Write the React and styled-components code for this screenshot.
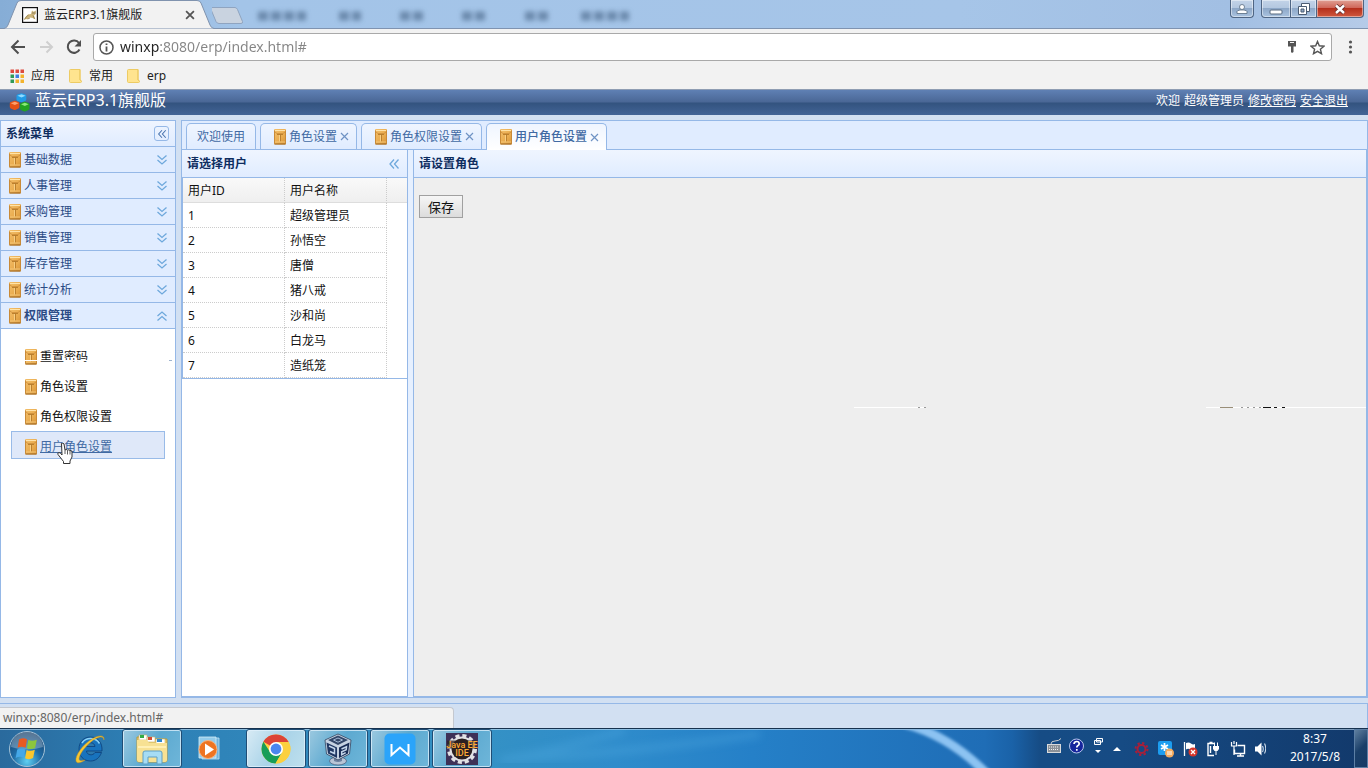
import React, {useState} from "react"
import styled, {createGlobalStyle, css} from "styled-components"


const GlobalStyle = createGlobalStyle`
*{
    box-sizing: border-box;
}
body{
    margin: 0;
    overflow: hidden;
    font-family: "Noto Sans", "Noto Sans CJK SC", sans-serif;
    font-size: 12px;
    line-height: 16px;
    color: #111;
}
button, input{
    font: inherit;
    color: inherit;
    margin: 0;
    padding: 0;
    border: 0;
    background: none;
}
svg{
    display: block;
    flex: none;
}`

const Screen = styled.div`
    display: flex;
    flex-direction: column;
    height: 100vh;
    background: #d2e0f2;
`

/* ---------- browser ---------- */

const TitleBar = styled.header`
    position: relative;
    display: flex;
    align-items: flex-start;
    flex: none;
    height: 29px;
    padding-left: 4px;
    border-bottom: 1px solid #7f93b0;
    background: linear-gradient(90deg, #86add6 0, #a3c4e8 240px, #a6c5e8 70%, #a2bfe3 90%, #b6cbe8 100%);
`

const BrowserTab = styled.div`
    position: relative;
    display: flex;
    align-items: center;
    gap: 6px;
    width: 208px;
    height: 29px;
    padding: 0 17px 0 18px;
`

const TabShape = styled.svg`
    position: absolute;
    left: 0;
    top: 0;
`

const TabTitle = styled.span`
    position: relative;
    flex: 1;
    color: #222;
`

const TabIcon = styled.span`
    position: relative;
`

const PlainButton = styled.button`
    position: relative;
    display: flex;
    align-items: center;
    justify-content: center;
`

const WindowButtons = styled.div`
    display: flex;
    margin-left: auto;
    padding-right: 4px;
`

const WindowButton = styled.button`
    display: flex;
    align-items: center;
    justify-content: center;
    width: ${props => props.$w}px;
    height: 18px;
    margin-right: ${props => props.$gap || 0}px;
    border: 1px solid #4f6583;
    border-top: 0;
    border-left-width: ${props => props.$joined ? 0 : 1}px;
    border-radius: ${props => props.$radius};
    box-shadow: inset 0 0 0 1px rgba(255,255,255,.45);
    background: ${props => props.$close
        ? "linear-gradient(#e0a093 0, #d0685a 45%, #b5301c 50%, #d0583e 100%)"
        : "linear-gradient(#c3d3e8 0, #b4c8e0 45%, #8ea8c8 50%, #a9c2df 100%)"};
`

const AddressRow = styled.div`
    display: flex;
    align-items: center;
    flex: none;
    height: 35px;
    padding: 1px 10px 0 10px;
    background: #f2f2f2;
`

const NavButton = styled(PlainButton)`
    width: 16px;
    height: 16px;
    margin-right: ${props => props.$gap || 12}px;
`

const AddressBox = styled.label`
    display: flex;
    align-items: center;
    flex: 1;
    gap: 6px;
    height: 28px;
    padding: 0 5px;
    border: 1px solid #a9a9a9;
    border-radius: 3px;
    background: #fff;
`

const AddressInput = styled.input`
    flex: 1;
    min-width: 0;
    font-size: 14px;
    line-height: 20px;
    outline: none;
    background: linear-gradient(90deg, #222 40px, #858585 40px);
    background-clip: text;
    -webkit-background-clip: text;
    -webkit-text-fill-color: transparent;
`

const Bookmarks = styled.nav`
    display: flex;
    align-items: center;
    flex: none;
    gap: 14px;
    height: 25px;
    padding: 0 10px 1px;
    background: #f2f2f2;
`

const Bookmark = styled.a`
    display: flex;
    align-items: center;
    gap: 7px;
    color: #222;
    text-decoration: none;
`

const StatusBubble = styled.div`
    position: absolute;
    left: 0;
    bottom: 0;
    width: 454px;
    height: 21px;
    padding: 2px 3px;
    border: 1px solid #c4c8cf;
    border-width: 1px 1px 0 0;
    border-top-right-radius: 4px;
    background: #f2f2f2;
    color: #666;
`

/* ---------- erp page ---------- */

const Banner = styled.header`
    display: flex;
    align-items: center;
    flex: none;
    height: 26px;
    padding: 0 20px 0 9px;
    border-top: 1px solid #8f9db3;
    background: linear-gradient(#5f80b4 0, #4a6796 12px, #33537f 13px, #426496 100%);
    color: #fff;
`

const BannerTitle = styled.h1`
    flex: 1;
    margin: 0 0 0 5px;
    padding-bottom: 5px;
    font-size: 16px;
    font-weight: 400;
    line-height: 20px;
`

const BannerLinks = styled.div`
    display: flex;
    gap: 4px;
    padding-bottom: 3px;

    a{
        color: #fff;
    }
`

const Workspace = styled.div`
    display: flex;
    flex: 1;
    gap: 5px;
    min-height: 0;
    padding: 5px 0;
`

const panelBorder = css`
    border: 1px solid #95b8e7;
`

const headerFill = css`
    background: linear-gradient(#eff5ff 0, #e0ecff 100%);
`

const Sidebar = styled.aside`
    position: relative;
    flex: none;
    width: 176px;
    ${panelBorder}
    background: #fff;
`

const PanelHeader = styled.div`
    display: flex;
    align-items: center;
    justify-content: space-between;
    height: ${props => props.$tall ? 28 : 26}px;
    padding: 0 6px 0 5px;
    border-bottom: 1px solid #95b8e7;
    ${headerFill}
    color: #0e2d5f;
    font-weight: 700;
`

const CollapseButton = styled(PlainButton)`
    width: 15px;
    height: 15px;
    border: ${props => props.$boxed ? "1px solid #95b8e7" : "0"};
    border-radius: 3px;
`

const AccordionHeader = styled.button`
    display: flex;
    align-items: center;
    gap: 2px;
    width: 100%;
    height: 26px;
    padding: 0 7px;
    border-bottom: 1px solid #95b8e7;
    background: #e0ecff;
    color: #2b4b85;
    font-weight: ${props => props.$open ? 700 : 400};
    text-align: left;

    span{
        flex: 1;
    }
`

const Submenu = styled.ul`
    display: flex;
    flex-direction: column;
    gap: 2px;
    margin: 0;
    padding: 12px 10px;
    list-style: none;
`

const SubmenuLink = styled.a`
    display: flex;
    align-items: center;
    gap: 2px;
    height: 28px;
    padding: 3px 12px 0;
    border: 1px solid ${props => props.$active ? "#99bbe8" : "transparent"};
    background: ${props => props.$active ? "#dfe8f9" : "none"};
    color: ${props => props.$active ? "#416aa3" : "#111"};
    text-decoration: ${props => props.$active ? "underline" : "none"};
`

const Pointer = styled.svg`
    position: absolute;
    left: 54px;
    top: 321px;
`

const Center = styled.main`
    display: flex;
    flex-direction: column;
    flex: 1;
    min-width: 0;
    ${panelBorder}
    background: #e6f0ff;
`

const TabStrip = styled.div`
    display: flex;
    align-items: flex-end;
    flex: none;
    gap: 4px;
    height: 29px;
    padding-left: 4px;
    border-bottom: 1px solid #95b8e7;
    background: #e0ecff;
`

const PageTab = styled.div`
    display: flex;
    align-items: center;
    height: ${props => props.$active ? 27 : 26}px;
    margin-bottom: ${props => props.$active ? -1 : 0}px;
    padding: 0 ${props => props.$plain ? 10 : 7}px 0 ${props => props.$plain ? 10 : 12}px;
    border: 1px solid #95b8e7;
    border-bottom: 0;
    border-radius: 5px 5px 0 0;
    background: ${props => props.$active ? "linear-gradient(#eff5ff, #fff)" : "linear-gradient(#eff5ff, #e0ecff)"};
    color: #416aa3;
`

const PageTabButton = styled.button`
    display: flex;
    align-items: center;
    gap: 2px;
    font-weight: ${props => props.$active ? 500 : 400};
`

const CloseButton = styled(PlainButton)`
    width: 9px;
    height: 16px;
    margin-left: 3px;
`

const Panels = styled.div`
    display: flex;
    flex: 1;
    gap: 5px;
    min-height: 0;
`

const Panel = styled.section`
    position: relative;
    flex: ${props => props.$width ? "none" : 1};
    width: ${props => props.$width ? props.$width + "px" : "auto"};
    min-width: 0;
    ${panelBorder}
    border-top: 0;
    border-left-width: ${props => props.$width ? 0 : 1}px;
    background: ${props => props.$fill || "#fff"};
`

const UserTable = styled.table`
    width: 100%;
    border-collapse: separate;
    border-spacing: 0;
    table-layout: fixed;
    border: 1px solid #95b8e7;
    border-width: 0 0 1px 1px;

    th, td{
        height: 25px;
        padding: 1px 5px 0;
        border-right: 1px dotted #ccc;
        border-bottom: 1px dotted #ccc;
        text-align: left;
        font-weight: 400;
        color: #111;
    }
    th{
        background: linear-gradient(#f9f9f9, #efefef);
        border-bottom: 1px solid #ddd;
    }
    th:last-child, td:last-child{
        border-right: 0;
    }
    td:last-child{
        border-bottom: 0;
    }
`

const SaveButton = styled.button`
    display: block;
    width: 44px;
    height: 23px;
    margin: 17px 5px;
    border: 1px solid #a0a0a0;
    background: linear-gradient(#f6f6f6, #dcdcdc);
    color: #111;
    font-size: 13px;
`

const Streaks = styled.svg`
    position: absolute;
    right: 0;
    top: ${props => props.$top}px;
    pointer-events: none;
`

const SouthPanel = styled.footer`
    position: relative;
    flex: none;
    height: 25px;
    ${panelBorder}
    border-bottom: 0;
    border-left: 0;
    background: #d2e0f2;
`

/* ---------- taskbar ---------- */

const Taskbar = styled.footer`
    position: relative;
    display: flex;
    align-items: stretch;
    flex: none;
    height: 40px;
    border-top: 1px solid #17324f;
    box-shadow: inset 0 1px 0 rgba(200,225,245,.6);
    background: linear-gradient(90deg, #2a6a9d 0, #2d7fb5 10%, #3592c4 34%, #2f8ccb 45%, #2580c8 55%, #1f6db6 72%, #1a62a8 74%, #164c85 76%, #164b84 82%, #12396b 100%);
`

const Swoosh = styled.svg`
    position: absolute;
    left: 0;
    top: 1px;
`

const TaskButtons = styled.div`
    position: relative;
    display: flex;
    gap: 2px;
    flex: 1;
`

const TaskButton = styled.button`
    display: flex;
    align-items: center;
    justify-content: center;
    width: 60px;
    height: 39px;
    border: 1px solid ${props => props.$open ? "#1f4d75" : "transparent"};
    border-radius: 3px;
    box-shadow: ${props => props.$open ? "inset 0 0 0 1px rgba(225,242,252,.75)" : "none"};
    background: ${props => !props.$open ? "none" : props.$current
        ? "linear-gradient(120deg, #d8ebf5, #a9d3e8 50%, #bfe0ee)"
        : "linear-gradient(120deg, #9cc9e0, #5ca9d0 50%, #6fb6d9)"};
`

const StartButton = styled(TaskButton)`
    width: 58px;
    padding-right: 4px;
`

const Tray = styled.div`
    position: relative;
    display: flex;
    align-items: center;
`

const Clock = styled.time`
    width: 64px;
    margin: 0 7px 0 17px;
    padding-bottom: 2px;
    color: #fff;
    line-height: 18px;
    text-align: center;
`

const ShowDesktop = styled.button`
    width: 14px;
    border: 1px solid #5c7fa5;
    background: linear-gradient(135deg, #5f7f9f, #1a3f69 50%, #163a66);
`


const BoxIcon = () => (
    <svg width="14" height="16" viewBox="0 0 14 16">
        <defs>
            <linearGradient id="gold" x1="0" y1="0" x2="1" y2="1">
                <stop offset="0" stopColor="#f3c06c"/>
                <stop offset=".6" stopColor="#e9ab4e"/>
                <stop offset="1" stopColor="#d59236"/>
            </linearGradient>
        </defs>
        <path d="M1 1q0-1 1-1h10q1 0 1 1v13.500q0 1-1 1H2q-1 0-1-1z" fill="url(#gold)"/>
        <path d="M2 1h10v1H2z" fill="#ffe3a8"/>
        <path d="M1.500 1.500v13M12.500 1.500v13" stroke="#c98a38" strokeWidth="1"/>
        <path d="M2 3l2 1.500h6L12 3" fill="none" stroke="#cd8d39" strokeWidth=".8"/>
        <path d="M4 5.500h6M7.500 5.500v7" stroke="#b57a2a" strokeWidth=".9"/>
        <path d="M6.500 6v6.500" stroke="#fbd792" strokeWidth=".8"/>
        <path d="M2 13h10" stroke="#f6cd84" strokeWidth=".8"/>
        <path d="M1.500 15h11" stroke="#9a6422"/>
    </svg>
)

const Chevrons = ({dir = "down", color = "#6ea8dc", size = 12}) => {
    const turn = {down: 0, up: 180, left: 90}[dir]
    return (
        <svg width={size} height={size} viewBox="0 0 12 12" fill="none" stroke={color} strokeWidth="1.3">
            <path d="M1.500 1.500L6 5.500l4.500-4M1.500 6L6 10l4.500-4" transform={`rotate(${turn} 6 6)`}/>
        </svg>
    )
}

const Cross = ({size = 9, color = "#6f93c4", width = 1.2}) => (
    <svg width={size} height={size} viewBox="0 0 9 9" stroke={color} strokeWidth={width}>
        <path d="M1 1l7 7M8 1l-7 7"/>
    </svg>
)

const CatIcon = () => (
    <svg width="16" height="16" viewBox="0 0 16 16">
        <rect x=".6" y=".6" width="14.800" height="14.800" fill="#fff" stroke="#111" strokeWidth="1.200"/>
        <path d="M2 12.500l1.500-2.500 2.500-2.500 3-.5 1-3.500 1.500 1.200 2.500-1.200-.3 3.500-1.700 1.500 1.500 4-2.800-1.500-3-.5-2 1.500z" fill="#cdb57a"/>
        <path d="M2.500 12.500l2-3 2-1.500M11 8.500l1.500 3.500M5.500 12l2.500-1" fill="none" stroke="#857243" strokeWidth=".7"/>
        <path d="M10.500 6h1M12.500 6h.8" stroke="#333" strokeWidth=".8"/>
    </svg>
)

const FolderMark = () => (
    <svg width="13" height="14" viewBox="0 0 13 14">
        <path d="M.5 1.500Q.5.5 1.500.5h9.500V11l1.500 1v.5q0 1-1 1h-10q-1 0-1-1z" fill="#ffe48f" stroke="#edcb63"/>
        <path d="M11 .5V11l1.500 1" fill="none" stroke="#edcb63"/>
    </svg>
)

const AppsIcon = () => {
    const colors = ["#dd4b3e", "#dd4b3e", "#dd4b3e", "#2f9a57", "#3d7fe0", "#f3b32c", "#2f9a57", "#f3b32c", "#f3b32c"]
    return (
        <svg width="14" height="14" viewBox="0 0 14 14">
            {colors.map((c, i) => (
                <rect key={i} x={(i % 3) * 5 + .5} y={Math.floor(i / 3) * 5 + .5} width="3.500" height="3.500" fill={c}/>
            ))}
        </svg>
    )
}

const CubesIcon = () => (
    <svg width="21" height="19" viewBox="0 0 21 19">
        <path d="M7.500 3q0-1 1-1.400L11.500.4q1-.3 2 0l2.800 1.200q1 .4 1 1.400v3.500q0 1-1 1.400L13.400 9q-1 .3-2 0L8.500 7.900q-1-.4-1-1.400z" fill="#219be6"/>
        <path d="M8.500 2.800l4-1.600 4 1.600-4 1.800z" fill="#8fdbff"/>
        <path d="M.8 10.500q0-1 1-1.400L4.800 8q1-.3 2 0l2.600 1.100q1 .4 1 1.400V14q0 1-1 1.400L6.700 16.700q-1 .4-2 0L1.800 15.400q-1-.4-1-1.400z" fill="#e65216"/>
        <path d="M1.800 10.300l4-1.500 3.800 1.500-3.800 1.800z" fill="#ffa06c"/>
        <path d="M11 11.500q0-1 1-1.400L14.700 9q1-.3 2 0l2.800 1.100q1 .4 1 1.400v4q0 1-1 1.400l-2.800 1.400q-1 .4-2 0L12 16.900q-1-.4-1-1.400z" fill="#23a321"/>
        <path d="M12 11.300l3.800-1.600 3.800 1.600-3.800 1.800z" fill="#8be878"/>
    </svg>
)

const HandPointer = () => (
    <Pointer width="20" height="23" viewBox="0 0 20 23">
        <path d="M6.500 1.500q1.500-1 2.500.5l1 6q1.200-1.200 2.500.2 1.500-1 2.500.4 1.800-.6 2 1.400v5l-2 4v2.500H8.500v-2L3 12.500q-.8-1.800 1-2 1.500.2 3 2.500z" fill="#fff" stroke="#333" strokeWidth="1"/>
        <path d="M10 8v4M12.500 8.500v4M15 9v3.500" stroke="#333" strokeWidth=".8"/>
    </Pointer>
)

const WindowsOrb = () => (
    <svg width="38" height="38" viewBox="0 0 38 38">
        <defs>
            <radialGradient id="orb" cx=".5" cy=".85" r=".9">
                <stop offset="0" stopColor="#5fd0f2"/>
                <stop offset=".45" stopColor="#1f6ca6"/>
                <stop offset="1" stopColor="#18395f"/>
            </radialGradient>
        </defs>
        <circle cx="19" cy="19" r="17.500" fill="url(#orb)" stroke="#a5c3d8"/>
        <path d="M3 17a16 15 0 0132 0q-16 5-32 0z" fill="#fff" opacity=".28"/>
        <path d="M11 9.500q4-2.300 8-.3l-1.400 8.500q-4-2-8 0z" fill="#e85a23"/>
        <path d="M20.300 10q4 1.700 8.500-.3l-1.700 8.300q-4 2-8.200.2z" fill="#8cc63e"/>
        <path d="M9.200 19.500q4-2 8.200-.1l-1.500 8.300q-4-1.800-8.200.2z" fill="#45a8e8"/>
        <path d="M18.600 20q4 1.800 8.200-.2l-1.700 8.300q-4 2-8 .1z" fill="#fcc72c"/>
    </svg>
)

const IeIcon = () => (
    <svg width="34" height="34" viewBox="0 0 34 34">
        <path d="M17.500 5C25 5 29.500 10.500 29 19H13.500c.3 4.500 6.500 5 8.500 1.500h6.500C26.500 26 22.500 29 17.500 29 10.500 29 6 24 6 17S10.500 5 17.500 5zM13.500 14.500h8.500c-.5-5-8-5-8.500 0z" fill="#1873bd" stroke="#0c3f78" strokeWidth=".8"/>
        <path d="M9 11q3-4.500 8.500-4.500 6 0 9 5" fill="none" stroke="#8bd2f5" strokeWidth="1.500"/>
        <path d="M31 8c1-5-5-5.500-12-1C9 13 2 24 3 29c.6 3 5 2 9-1-5 1.500-7 .5-5.500-3.500C9 18 17 9.500 23 6.500c4-2 7.500-2.500 8 1.500z" fill="#f5c733" stroke="#c8921c" strokeWidth=".5"/>
    </svg>
)

const ExplorerIcon = () => (
    <svg width="34" height="32" viewBox="0 0 34 32">
        <path d="M2 4h10l2 2h18v21q0 2-2 2H4q-2 0-2-2z" fill="#e9cd73" stroke="#b99a3d"/>
        <path d="M4 2h8v5H4zM12 4h8v5h-8zM21 6h9v5h-9z" fill="#fff" stroke="#cdb467" strokeWidth=".6"/>
        <path d="M5 2h4v3H5z" fill="#35ad45"/>
        <path d="M13 4h4v3h-4z" fill="#d54b30"/>
        <path d="M22 6h5v3h-5z" fill="#3188cc"/>
        <path d="M2 7h10l2 3h18v17q0 2-2 2H4q-2 0-2-2z" fill="#f7e193"/>
        <path d="M3 14h28" stroke="#fff0b5" strokeWidth="2"/>
        <path d="M8 20q0-2 2-2h15q2 0 2 2v11h-5v-7h-9v7H8z" fill="#a6dcf4" stroke="#5f9fc5"/>
    </svg>
)

const MediaIcon = () => (
    <svg width="32" height="28" viewBox="4 0 32 28">
        <path d="M8 3h17v21H8z" fill="#6fb3dd" stroke="#bfe1f3" strokeWidth=".8"/>
        <path d="M5 2h17v21H5z" fill="#93cbea" stroke="#d5edf8" strokeWidth=".8"/>
        <circle cx="14" cy="14.500" r="9" fill="#ee7421" stroke="#f9b37c"/>
        <path d="M11 8.500l9 6-9 6z" fill="#fff"/>
    </svg>
)

const ChromeIcon = () => (
    <svg width="30" height="30" viewBox="0 0 30 30">
        <circle cx="15" cy="15" r="14.500" fill="#fbd03f"/>
        <path d="M15 15L2.400 7.700A14.500 14.500 0 0127.600 8z" fill="#dc4437"/>
        <path d="M2.440 7.750A14.500 14.500 0 0014.500 29.500l6.500-11L15 15l-6 3z" fill="#179d58"/>
        <path d="M15 8h12.600A14.500 14.500 0 0114.500 29.500L21 18.500z" fill="#fbd03f"/>
        <circle cx="15" cy="15" r="7" fill="#fff"/>
        <circle cx="15" cy="15" r="5.400" fill="#4a86f0"/>
    </svg>
)

const VirtualBoxIcon = () => (
    <svg width="30" height="34" viewBox="0 0 30 34">
        <ellipse cx="15" cy="29" rx="8.500" ry="4" fill="#b9c5d6" stroke="#4e6180" strokeWidth=".8"/>
        <path d="M11 24h8v5q-4 2-8 0z" fill="#6d809f"/>
        <path d="M2 8L15 2l13 6-1.500 14L15 28 3.500 22z" fill="#c5d2e2" stroke="#33455f" strokeWidth=".8"/>
        <path d="M5 8l10-4.500L25 8l-10 5z" fill="#33476a"/>
        <path d="M3.500 10.500L14 15.500V26l-9-4.500z" fill="#1f3763"/>
        <path d="M26.500 10.500L16 15.500V26l9-4.500z" fill="#182c55"/>
        <path d="M6 14l5.500 2.500v5L7 19.500M18.500 17l5-2.300-.3 3-4.500 2v3l4-2" fill="none" stroke="#c3d5ea" strokeWidth="1.500"/>
        <path d="M10.500 8L15 6l4.500 2-4.500 2.200z" fill="none" stroke="#a5bbd6"/>
    </svg>
)

const WpsIcon = () => (
    <svg width="32" height="32" viewBox="0 0 32 32">
        <rect x=".5" y=".5" width="31" height="31" rx="5" fill="#2ba4fa"/>
        <path d="M7.500 11v11l8.500-7.500 8.500 7.500V11" fill="none" stroke="#fff" strokeWidth="2"/>
    </svg>
)

const EclipseIcon = () => (
    <svg width="32" height="32" viewBox="0 0 32 32">
        <rect width="32" height="32" fill="#3e3157"/>
        <circle cx="16" cy="16" r="13" fill="none" stroke="#e2e1e4" strokeWidth="4" strokeDasharray="4 2.800"/>
        <circle cx="16" cy="16" r="11.500" fill="#2c2022" stroke="#e2e1e4" strokeWidth="2"/>
        <path d="M1 7.500h30v8H1zM8 15.500h16v8H8z" fill="#2c2022" opacity=".75"/>
        <text x="16" y="15" textAnchor="middle" fontFamily="Roboto, sans-serif" fontSize="9" fontWeight="500" fill="#ffab36">Java EE</text>
        <text x="16" y="23" textAnchor="middle" fontFamily="Roboto, sans-serif" fontSize="9" fontWeight="500" fill="#ffab36">IDE</text>
    </svg>
)

const TrayIcons = () => (
    <svg width="220" height="38" viewBox="1045 730 220 38">
        {/* keyboard */}
        <path d="M1050 744q0-3 4-3t6-2.500" fill="none" stroke="#c9ccd0"/>
        <rect x="1046.500" y="744.500" width="13" height="8" fill="#8b9198" stroke="#d8dadc"/>
        <path d="M1048 747h10M1048 749.500h10" stroke="#f2f2f2" strokeDasharray="1 1"/>
        {/* help */}
        <circle cx="1075.500" cy="746" r="7" fill="#15249c" stroke="#b7c6ec"/>
        <path d="M1073 744q.3-2.500 2.700-2.500t2.500 2.200q0 1.300-1.500 2-.9.500-.9 1.800M1075.800 749v1.800" fill="none" stroke="#fff" strokeWidth="1.700"/>
        <path d="M1095.500 738.500h6v3.500h-6zM1093.500 740.500h6v4h-6z" fill="#23548c" stroke="#fff"/>
        <path d="M1094 750h6l-3 3z" fill="#fff"/>
        <path d="M1112 751h8l-4-4z" fill="#fff"/>
        {/* red gear */}
        <circle cx="1140.500" cy="749" r="4" fill="none" stroke="#a81f39" strokeWidth="2"/>
        <circle cx="1140.500" cy="749" r="6" fill="none" stroke="#a81f39" strokeWidth="2" strokeDasharray="2.300 2.400"/>
        {/* sync */}
        <rect x="1157" y="741" width="14" height="14" rx="2" fill="#1c9df0"/>
        <path d="M1163.500 743v8M1160 745l7 4M1167 745l-7 4" stroke="#fff" strokeWidth="1.700"/>
        <circle cx="1168.500" cy="753" r="4.500" fill="#f4ab5e"/>
        <path d="M1166 752h5M1166 754h5" stroke="#fff"/>
        {/* flag */}
        <path d="M1183.500 742v14" stroke="#fff" strokeWidth="1.300"/>
        <path d="M1185 743q3-1 5 .5t4 .5v6q-2 .8-4.500-.5t-4.500 0z" fill="#fff"/>
        <circle cx="1192" cy="752" r="4.500" fill="#d5352b"/>
        <path d="M1190 750l4 4M1194 750l-4 4" stroke="#fff" strokeWidth="1.300"/>
        {/* power */}
        <path d="M1213 755.500h-6v-12h6M1208.500 742.500h3M1209.500 746v7" fill="none" stroke="#fff" strokeWidth="1.400"/>
        <path d="M1212 746h6v3l-1.500 2h-3l-1.500-2z" fill="#fff"/>
        <path d="M1213.500 742.500v4M1216.500 742.500v4M1215 750v5" stroke="#fff"/>
        {/* network */}
        <path d="M1236.500 745.500h7v8h-10v-4M1236 756h7M1239.500 753v3" fill="none" stroke="#fff" strokeWidth="1.400"/>
        <path d="M1230.500 742v4h5v-4M1233 746v9M1233 741v3" fill="none" stroke="#fff" strokeWidth="1.200"/>
        {/* volume */}
        <path d="M1254 746.500h2.500l4-4v13l-4-4h-2.500z" fill="#fff"/>
        <path d="M1262 746q1.500 3 0 6M1264 743.500q2.500 5 0 10" transform="translate(-.5 0)" fill="none" stroke="#cfdcea" strokeWidth="1.100"/>
    </svg>
)


const menuGroups = ["基础数据", "人事管理", "采购管理", "销售管理", "库存管理", "统计分析", "权限管理"]
const submenu = ["重置密码", "角色设置", "角色权限设置", "用户角色设置"]
const pageTabs = ["欢迎使用", "角色设置", "角色权限设置", "用户角色设置"]
const users = ["超级管理员", "孙悟空", "唐僧", "猪八戒", "沙和尚", "白龙马", "造纸笼"]

const tasks = [
    {name: "Internet Explorer", icon: <IeIcon/>},
    {name: "Explorer", icon: <ExplorerIcon/>, open: true},
    {name: "Media Player", icon: <MediaIcon/>},
    {name: "Chrome", icon: <ChromeIcon/>, open: true, current: true},
    {name: "VirtualBox", icon: <VirtualBoxIcon/>, open: true},
    {name: "WPS", icon: <WpsIcon/>, open: true},
    {name: "Eclipse", icon: <EclipseIcon/>, open: true},
]

// toolbar captions of the window behind, seen through the glass frame
const ghosts = [[12, 48], [93, 22], [154, 24], [216, 25], [279, 23], [335, 48]]


const BrowserChrome = () => {
    const [url, setUrl] = useState("winxp:8080/erp/index.html#")

    return (
        <>
        <TitleBar>
            <BrowserTab>
                <TabShape width="210" height="29" viewBox="0 0 210 29">
                    <path d="M0 28.500Q3 28 4 25L13 3Q14 .5 17 .5h176q3 0 4 2.500l9 22q1 3 4 3.500" fill="#f2f2f2" stroke="#8093ae"/>
                </TabShape>
                <TabIcon><CatIcon/></TabIcon>
                <TabTitle>蓝云ERP3.1旗舰版</TabTitle>
                <PlainButton aria-label="关闭"><Cross size={10} color="#555" width={1.6}/></PlainButton>
            </BrowserTab>
            <PlainButton aria-label="新标签页">
                <svg width="34" height="28" viewBox="0 0 34 28">
                    <path d="M-1 7.500h24q1.500 0 2.500 2l5 12q.5 2-1.500 2H7q-2 0-3-2L-1 9.500z" fill="#c9d3e0" stroke="#8fa4c0"/>
                </svg>
            </PlainButton>
            <svg width="390" height="28" viewBox="0 0 390 28">
                <defs>
                    <filter id="glass" filterUnits="userSpaceOnUse" x="0" y="0" width="390" height="28"><feGaussianBlur stdDeviation="2.500"/></filter>
                </defs>
                <g filter="url(#glass)" stroke="#587698" strokeWidth="9" opacity=".75">
                    {ghosts.map(([x, w]) => (
                        <path key={x} d={`M${x} 16h${w}`} strokeDasharray="10 3"/>
                    ))}
                </g>
            </svg>
            <WindowButtons>
                <WindowButton aria-label="用户" $w={24} $gap={7} $radius="0 0 4px 4px">
                    <svg width="12" height="12" viewBox="0 0 12 12" fill="#fff" stroke="#56697f" strokeWidth=".8">
                        <path d="M1 10.500V8.500q0-1 3-1.500h4q3 .5 3 1.500v2z"/>
                        <circle cx="6" cy="4" r="2.500"/>
                    </svg>
                </WindowButton>
                <WindowButton aria-label="最小化" $w={30} $radius="0 0 0 4px">
                    <svg width="14" height="12" viewBox="0 0 14 12"><rect x="1" y="7" width="12" height="4" rx="1" fill="#fff" stroke="#56697f"/></svg>
                </WindowButton>
                <WindowButton aria-label="还原" $w={26} $joined $radius="0">
                    <svg width="14" height="14" viewBox="0 0 14 14" fill="#fff" stroke="#4b5c72">
                        <path d="M4.500 1.500h8v8h-8z"/>
                        <path d="M1.500 4.500h8v8h-8z"/>
                        <path d="M4 7h3v3H4z" fill="#8fa6c4"/>
                    </svg>
                </WindowButton>
                <WindowButton aria-label="关闭窗口" $w={47} $joined $close $radius="0 0 4px 0">
                    <svg width="12" height="12" viewBox="0 0 12 12">
                        <path d="M2 2.500l8 7.500M10 2.500l-8 7.500" stroke="#5d2a2a" strokeWidth="4"/>
                        <path d="M2 2.500l8 7.500M10 2.500l-8 7.500" stroke="#fff" strokeWidth="2.400"/>
                    </svg>
                </WindowButton>
            </WindowButtons>
        </TitleBar>
        <AddressRow>
            <NavButton aria-label="后退">
                <svg width="16" height="16" viewBox="0 0 16 16" fill="none" stroke="#4f4f4f" strokeWidth="2"><path d="M15 8H2.500M8.500 1.500L2 8l6.500 6.500"/></svg>
            </NavButton>
            <NavButton aria-label="前进">
                <svg width="16" height="16" viewBox="0 0 16 16" fill="none" stroke="#cfcfcf" strokeWidth="2"><path d="M2 8h11.500M8.500 2.500L14 8l-5.500 5.500"/></svg>
            </NavButton>
            <NavButton aria-label="刷新" $gap={11}>
                <svg width="16" height="16" viewBox="0 0 16 16"><path d="M13.500 10.500A6.200 6.200 0 1113 4" fill="none" stroke="#4f4f4f" strokeWidth="2"/><path d="M15 1v6.500H8.500z" fill="#4f4f4f"/></svg>
            </NavButton>
            <AddressBox>
                <svg width="15" height="15" viewBox="0 0 15 15" fill="none" stroke="#555" strokeWidth="1.500"><circle cx="7.500" cy="7.500" r="6.500"/><path d="M7.500 6.500v5M7.500 3.500v1.600" strokeWidth="1.800"/></svg>
                <AddressInput aria-label="地址" value={url} spellCheck={false} onChange={(e) => setUrl(e.target.value)}/>
                <NavButton as="span" $gap={3}>
                    <svg width="10" height="14" viewBox="0 0 10 14"><path d="M1 1h8v5.500H6.500V12L5 13 4 12V6.500H1z" fill="#555"/><path d="M3 2.500h4" stroke="#f2f2f2"/></svg>
                </NavButton>
                <NavButton as="span" $gap={1}>
                    <svg width="15" height="15" viewBox="0 0 15 15" fill="none" stroke="#555" strokeWidth="1.400"><path d="M7.500 1.500l1.800 4.300 4.700.4-3.600 3 1.100 4.500-4-2.400-4 2.400 1.100-4.500L1 6.200l4.700-.4z"/></svg>
                </NavButton>
            </AddressBox>
            <PlainButton aria-label="菜单">
                <svg width="26" height="16" viewBox="0 0 26 16" fill="#555"><circle cx="18.500" cy="3" r="1.600"/><circle cx="18.500" cy="8" r="1.600"/><circle cx="18.500" cy="13" r="1.600"/></svg>
            </PlainButton>
        </AddressRow>
        <Bookmarks>
            <Bookmark href="#"><AppsIcon/>应用</Bookmark>
            <Bookmark href="#"><FolderMark/>常用</Bookmark>
            <Bookmark href="#"><FolderMark/>erp</Bookmark>
        </Bookmarks>
        </>
    )
}

const SystemMenu = () => {
    const [open, setOpen] = useState("权限管理")

    return (
        <Sidebar>
            <PanelHeader>
                系统菜单
                <CollapseButton $boxed aria-label="收起菜单"><Chevrons dir="left" color="#4a74ae" size={10}/></CollapseButton>
            </PanelHeader>
            {menuGroups.map(name => (
                <AccordionHeader key={name} $open={open === name} onClick={() => setOpen(name)}>
                    <BoxIcon/>
                    <span>{name}</span>
                    <Chevrons dir={open === name ? "up" : "down"}/>
                </AccordionHeader>
            ))}
            {open === "权限管理" && (
                <Submenu>
                    {submenu.map(name => (
                        <li key={name}>
                            <SubmenuLink href="#" $active={name === "用户角色设置"}><BoxIcon/>{name}</SubmenuLink>
                        </li>
                    ))}
                </Submenu>
            )}
            <Streaks width="174" height="1" $top={239}><path d="M0 .5h168" stroke="#fff" strokeWidth="1"/><path d="M168 .5h3" stroke="#9fb4cf"/></Streaks>
            <HandPointer/>
        </Sidebar>
    )
}

const UserPanel = () => (
    <Panel $width={226}>
        <PanelHeader $tall>
            请选择用户
            <CollapseButton aria-label="收起"><Chevrons dir="left"/></CollapseButton>
        </PanelHeader>
        <UserTable>
            <colgroup>
                <col width="102"/>
                <col width="102"/>
                <col/>
            </colgroup>
            <thead>
                <tr><th>用户ID</th><th>用户名称</th><th aria-hidden="true"></th></tr>
            </thead>
            <tbody>
                {users.map((name, i) => (
                    <tr key={name}><td>{i + 1}</td><td>{name}</td><td></td></tr>
                ))}
            </tbody>
        </UserTable>
        <Streaks width="60" height="1" $top={210}><path d="M0 .5h60" stroke="#fff"/></Streaks>
    </Panel>
)

const RolePanel = () => (
    <Panel $fill="#eee">
        <PanelHeader $tall>请设置角色</PanelHeader>
        <SaveButton>保存</SaveButton>
        <Streaks width="512" height="1" $top={257} viewBox="0 0 512 1">
            <path d="M0 .5h72M352 .5h160" stroke="#fff"/>
            <path d="M366 .5h13" stroke="#998e78"/>
            <path d="M64 .5h8M387 .5h22" stroke="#999" strokeDasharray="2 4"/>
            <path d="M409 .5h8M420 .5h3M428 .5h3" stroke="#111"/>
        </Streaks>
    </Panel>
)

const App = () => {
    const [tab, setTab] = useState("用户角色设置")

    return (
        <Screen>
            <GlobalStyle/>
            <BrowserChrome/>
            <Banner>
                <CubesIcon/>
                <BannerTitle>蓝云ERP3.1旗舰版</BannerTitle>
                <BannerLinks>
                    <span>欢迎</span>
                    <span>超级管理员</span>
                    <a href="#">修改密码</a>
                    <a href="#">安全退出</a>
                </BannerLinks>
            </Banner>
            <Workspace>
                <SystemMenu/>
                <Center>
                    <TabStrip>
                        {pageTabs.map((name, i) => (
                            <PageTab key={name} $plain={i === 0} $active={tab === name}>
                                <PageTabButton $active={tab === name} onClick={() => setTab(name)}>
                                    {i > 0 && <BoxIcon/>}
                                    {name}
                                </PageTabButton>
                                {i > 0 && <CloseButton aria-label={"关闭" + name}><Cross/></CloseButton>}
                            </PageTab>
                        ))}
                    </TabStrip>
                    <Panels>
                        <UserPanel/>
                        <RolePanel/>
                    </Panels>
                </Center>
            </Workspace>
            <SouthPanel>
                <StatusBubble>winxp:8080/erp/index.html#</StatusBubble>
            </SouthPanel>
            <Taskbar>
                <Swoosh width="1020" height="38" viewBox="0 0 1020 38">
                    <defs>
                        <filter id="soft"><feGaussianBlur stdDeviation="1.500"/></filter>
                        <filter id="softer"><feGaussianBlur stdDeviation="4"/></filter>
                    </defs>
                    <path d="M905-6Q950 6 988 45" fill="none" stroke="#8cc3f2" strokeWidth="9" filter="url(#soft)"/>
                    <path d="M500 30Q560 20 625 0M500 30Q640 22 760 4" fill="none" stroke="#4fa9e0" strokeWidth="7" opacity=".4" filter="url(#softer)"/>
                </Swoosh>
                <TaskButtons>
                    <StartButton aria-label="开始"><WindowsOrb/></StartButton>
                    {tasks.map(t => (
                        <TaskButton key={t.name} aria-label={t.name} $open={t.open} $current={t.current}>{t.icon}</TaskButton>
                    ))}
                </TaskButtons>
                <Tray>
                    <TrayIcons/>
                    <Clock>8:37<br/>2017/5/8</Clock>
                </Tray>
                <ShowDesktop aria-label="显示桌面"/>
            </Taskbar>
        </Screen>
    )
}

export default App
